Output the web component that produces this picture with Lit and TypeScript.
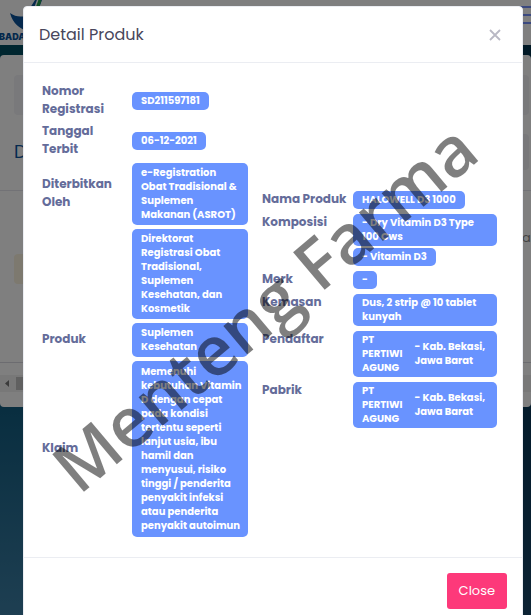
import { LitElement, html, css } from "lit";
import { customElement } from "lit/decorators.js";

type Row = { label: string; values: string[][]; wide?: boolean; size?: string };

const registration: Row[] = [
  { label: "Nomor Registrasi", values: [["SD211597181"]] },
  { label: "Tanggal Terbit", values: [["06-12-2021"]] },
  { label: "Diterbitkan Oleh", values: [["e-Registration", "Obat Tradisional &", "Suplemen", "Makanan (ASROT)"]], wide: true, size: "roomy" },
  { label: "", values: [["Direktorat", "Registrasi Obat", "Tradisional,", "Suplemen", "Kesehatan, dan", "Kosmetik"]], wide: true, size: "roomy" },
  { label: "Produk", values: [["Suplemen", "Kesehatan"]], wide: true, size: "roomy" },
  {
    label: "Klaim",
    values: [["Memenuhi", "kebutuhan Vitamin", "D dengan cepat", "pada kondisi", "tertentu seperti", "lanjut usia, ibu", "hamil dan", "menyusui, risiko", "tinggi / penderita", "penyakit infeksi", "atau penderita", "penyakit autoimun"]],
    wide: true,
    size: "tall",
  },
];

const product: Row[] = [
  { label: "Nama Produk", values: [["HALOWELL D3 1000"]] },
  { label: "Komposisi", values: [["- Dry Vitamin D3 Type", "100 Cws"], ["- Vitamin D3"]] },
  { label: "Merk", values: [["-"]] },
  { label: "Kemasan", values: [["Dus, 2 strip @ 10 tablet", "kunyah"]] },
];

const companies = ["Pendaftar", "Pabrik"];

const lines = (text: string[]) => text.map((line, i) => (i ? html`<br />${line}` : line));

@customElement("page-behind")
export class PageBehind extends LitElement {
  static styles = css`
    :host {
      display: flex;
      flex-direction: column;
      min-height: 100%;
      background:
        linear-gradient(90deg, transparent 40%, rgba(0, 30, 60, 0.6)),
        linear-gradient(180deg, #004c5e 9%, #125c80 66%, #3c7ea4);
      font-family: Poppins, Inter, sans-serif;
    }
    header {
      display: flex;
      justify-content: space-between;
      height: 45px;
      background: #fff;
      overflow: hidden;
    }
    .lines {
      width: 40px;
      height: 45px;
    }
    .card {
      margin-top: 10px;
      height: 352px;
      box-sizing: border-box;
      padding-top: 20px;
      border-radius: 4px;
      background: #fff;
      display: flex;
      flex-direction: column;
    }
    .crumb {
      height: 40px;
      margin: 0 2px 0 14px;
      border-radius: 4px;
      background: #f3f3f7;
    }
    .top {
      display: flex;
      align-items: center;
      justify-content: space-between;
      height: 36px;
      margin: 19px 2px 0 14px;
    }
    .title {
      margin: 0;
      font-size: 18px;
      line-height: 24px;
      font-weight: 400;
      color: #0a549f;
    }
    .tool {
      width: 80px;
      height: 36px;
      border-radius: 4px;
      background: #f0f1f5;
    }
    .results {
      margin-top: 20px;
      border-top: 1px solid #e4e4ec;
      border-bottom: 1px solid #d8d8e0;
      height: 173px;
      display: grid;
      grid-template-columns: 1fr 19px;
      padding-left: 14px;
      box-sizing: border-box;
      font-size: 13px;
      line-height: 20px;
      color: #888;
    }
    .notice {
      align-self: start;
      margin-top: 63px;
      height: 30px;
      border-radius: 4px;
      background: #faf3de;
    }
    .side {
      margin-top: 17px;
      padding-left: 10px;
      overflow: hidden;
    }
    .side b {
      display: block;
      text-indent: -6px;
      color: #3b5bb5;
      font-weight: 500;
    }
    .scroll {
      margin-top: 12px;
      height: 17px;
      display: flex;
      align-items: center;
      background: #f1f1f1;
    }
    .scroll svg {
      width: 16px;
      height: 17px;
    }
    .thumb {
      flex: 0 0 50%;
      height: 13px;
      background: #c1c1c1;
    }
  `;

  render() {
    return html`
      <header>
        <svg width="60" height="45" viewBox="0 0 60 45">
          <path d="M10 13Q17 18 25 16L35 0H42L30 32Q14 28 10 13Z" fill="#0a539a" />
          <path d="M38 0L31 19" stroke="#fff" stroke-width="2" />
          <path d="M40 0L34 17" stroke="#23a04a" stroke-width="3" />
          <text x="-1" y="40" font-family="Inter, sans-serif" font-size="9" font-weight="900" fill="#0a539a">BADAN</text>
        </svg>
        <svg class="lines" viewBox="0 0 40 45">
          <path d="M20 7H40M20 15H40M20 23H40" stroke="#7693ff" stroke-width="2" />
        </svg>
      </header>
      <div class="card">
        <div class="crumb"></div>
        <div class="top">
          <h1 class="title">Data</h1>
          <div class="tool"></div>
        </div>
        <div class="results">
          <div class="notice"></div>
          <div class="side"><b>s</b>ar</div>
        </div>
        <div class="scroll">
          <svg viewBox="0 0 16 17"><path d="M9 5V12L5 8.500Z" fill="#777" /></svg>
          <div class="thumb"></div>
        </div>
      </div>
    `;
  }
}

@customElement("app-root")
export class AppRoot extends LitElement {
  static styles = css`
    :host {
      display: block;
      position: relative;
      height: 100vh;
      overflow: hidden;
      font-family: Poppins, Inter, sans-serif;
    }
    page-behind {
      height: 100%;
    }
    .overlay {
      position: absolute;
      inset: 0;
      padding: 6px 0 0 15px;
      background: rgba(0, 0, 0, 0.5);
    }
    .modal {
      box-sizing: border-box;
      max-width: 500px;
      margin: 0 auto;
      border: 1px solid #ebedf2;
      border-radius: 4px;
      background: #fff;
    }
    .head {
      display: flex;
      align-items: center;
      justify-content: space-between;
      height: 55px;
      padding: 0 20px 0 15px;
      border-bottom: 1px solid #ebedf2;
    }
    h2 {
      margin: 0;
      font-size: 16px;
      line-height: 24px;
      font-weight: 400;
      color: #48465b;
    }
    .x {
      display: flex;
      padding: 0;
      border: 0;
      background: none;
    }
    .body {
      display: flex;
      align-items: center;
      justify-content: space-between;
      padding: 18px 25px 18px 18px;
    }
    table {
      table-layout: fixed;
      border-spacing: 0;
      border-collapse: separate;
    }
    .left {
      width: 206px;
    }
    .right {
      width: 235px;
    }
    .key {
      box-sizing: border-box;
      width: 90px;
      padding: 1px 10px 3px 0;
      text-align: left;
      font-size: 12px;
      line-height: 18px;
      font-weight: 700;
      color: #646c9a;
    }
    .right .key {
      width: 91px;
      padding: 1px 0 3px;
      vertical-align: top;
      white-space: nowrap;
    }
    .value {
      padding: 2px 0;
      line-height: 0;
    }
    .right .value {
      padding: 2px 0 3px;
    }
    .badge {
      display: inline-block;
      box-sizing: border-box;
      padding: 2px 9px;
      border-radius: 5px;
      background: #6993ff;
      color: #fff;
      font-size: 10px;
      line-height: 14px;
      font-weight: 700;
      white-space: nowrap;
      vertical-align: top;
    }
    .badge + .badge {
      margin-top: 2px;
    }
    .wide {
      display: block;
    }
    .roomy {
      padding: 3px 9px;
    }
    .tall {
      padding: 4px 9px;
    }
    .pair {
      display: flex;
      align-items: center;
      gap: 12px;
    }
    .foot {
      display: flex;
      justify-content: flex-end;
      padding: 15px;
      border-top: 1px solid #ebedf2;
    }
    .close {
      height: 36px;
      padding: 0 12px;
      border: 0;
      border-radius: 3px;
      background: #fd397a;
      color: #fff;
      font: 400 13px/20px Poppins, Inter, sans-serif;
    }
    .mark {
      position: absolute;
      inset: 0;
      width: 100%;
      height: 100%;
      pointer-events: none;
    }
  `;

  private row(r: Row) {
    return html`<tr>
      <th class="key" scope="row">${r.label}</th>
      <td class="value">
        ${r.values.map(
          (v) => html`<span class="badge ${r.wide || v.length > 1 ? "wide" : ""} ${r.size ?? ""}">${lines(v)}</span>`,
        )}
      </td>
    </tr>`;
  }

  render() {
    return html`
      <page-behind></page-behind>
      <div class="overlay">
        <section class="modal" role="dialog" aria-labelledby="title">
          <div class="head">
            <h2 id="title">Detail Produk</h2>
            <button class="x" aria-label="Tutup">
              <svg width="14" height="14" viewBox="0 0 14 14">
                <path d="M2 2L12 12M12 2L2 12" stroke="#b9b8c4" stroke-width="1.800" />
              </svg>
            </button>
          </div>
          <div class="body">
            <table class="left">
              ${registration.map((r) => this.row(r))}
            </table>
            <table class="right">
              ${product.map((r) => this.row(r))}
              ${companies.map(
                (c) => html`<tr>
                  <th class="key" scope="row">${c}</th>
                  <td class="value">
                    <span class="badge wide pair">
                      <span>PT<br />PERTIWI<br />AGUNG</span>
                      <span>- Kab. Bekasi,<br />Jawa Barat</span>
                    </span>
                  </td>
                </tr>`,
              )}
            </table>
          </div>
          <div class="foot"><button class="close">Close</button></div>
        </section>
      </div>
      <svg class="mark" viewBox="0 0 531 615" aria-hidden="true">
        <text
          transform="translate(79 496) rotate(-40)"
          font-family="Open Sans, sans-serif"
          font-size="69"
          font-weight="600"
          fill="#000"
          fill-opacity="0.5"
        >Menteng Farma</text>
      </svg>
    `;
  }
}
